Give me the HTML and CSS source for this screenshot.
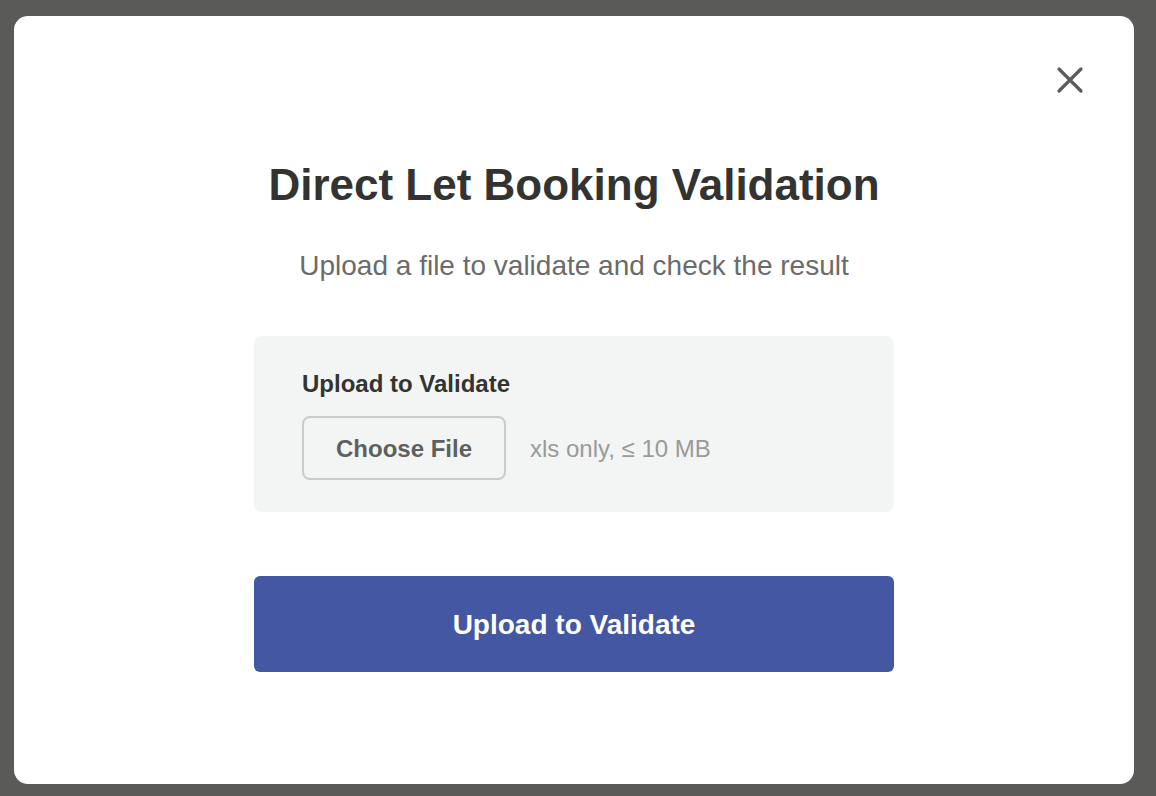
FILE: index.html
```html
<!DOCTYPE html>
<html lang="en">
<head>
<meta charset="utf-8">
<title>Direct Let Booking Validation</title>
<link rel="stylesheet" href="styles.css">
</head>
<body>
<div class="modal">
  <button class="close" aria-label="Close">
    <svg width="28" height="28" viewBox="0 0 28 28"><path d="M3 3 L25 25 M25 3 L3 25" stroke="#5b5b5b" stroke-width="3.2" stroke-linecap="round" fill="none"/></svg>
  </button>
  <div class="content">
    <h1 class="title">Direct Let Booking Validation</h1>
    <p class="subtitle">Upload a file to validate and check the result</p>
    <div class="panel">
      <div class="label">Upload to Validate</div>
      <div class="file-row">
        <button class="choose">Choose File</button>
        <span class="hint">xls only, ≤ 10 MB</span>
      </div>
    </div>
    <button class="primary">Upload to Validate</button>
  </div>
</div>
</body>
</html>
```
FILE: styles.css
```css
html, body {
  margin: 0;
  height: 100%;
}
body {
  background: #5a5a58;
  padding: 16px 22px 12px 14px;
  box-sizing: border-box;
  font-family: "Liberation Sans", Arial, sans-serif;
}
.modal {
  position: relative;
  background: #ffffff;
  border-radius: 14px;
  height: 768px;
  box-sizing: border-box;
  padding-top: 143px;
}
.close {
  position: absolute;
  top: 50px;
  right: 50px;
  width: 28px;
  height: 28px;
  padding: 0;
  border: 0;
  background: none;
  display: flex;
}
.content {
  width: 640px;
  margin: 0 auto;
  display: flex;
  flex-direction: column;
}
.title {
  margin: 0;
  font-size: 44px;
  line-height: 52px;
  font-weight: 700;
  color: #333432;
  text-align: center;
}
.subtitle {
  margin: 38px 0 0;
  font-size: 28px;
  line-height: 34px;
  color: #6b6b6b;
  text-align: center;
}
.panel {
  margin-top: 53px;
  background: #f3f5f4;
  border-radius: 8px;
  padding: 34px 48px 32px;
}
.label {
  font-size: 24px;
  line-height: 28px;
  font-weight: 700;
  color: #333432;
}
.file-row {
  margin-top: 18px;
  display: flex;
  align-items: center;
  gap: 24px;
}
.choose {
  width: 204px;
  height: 64px;
  padding: 2px 0 0;
  border: 2px solid #cbcbcb;
  border-radius: 8px;
  background: transparent;
  font-family: inherit;
  font-size: 24px;
  font-weight: 700;
  color: #5f5f5f;
}
.hint {
  padding-top: 2px;
  font-size: 24px;
  color: #9a9a9a;
}
.primary {
  margin-top: 64px;
  height: 96px;
  padding: 2px 0 0;
  border: 0;
  border-radius: 6px;
  background: #4457a2;
  color: #ffffff;
  font-family: inherit;
  font-size: 28px;
  font-weight: 700;
}
```
